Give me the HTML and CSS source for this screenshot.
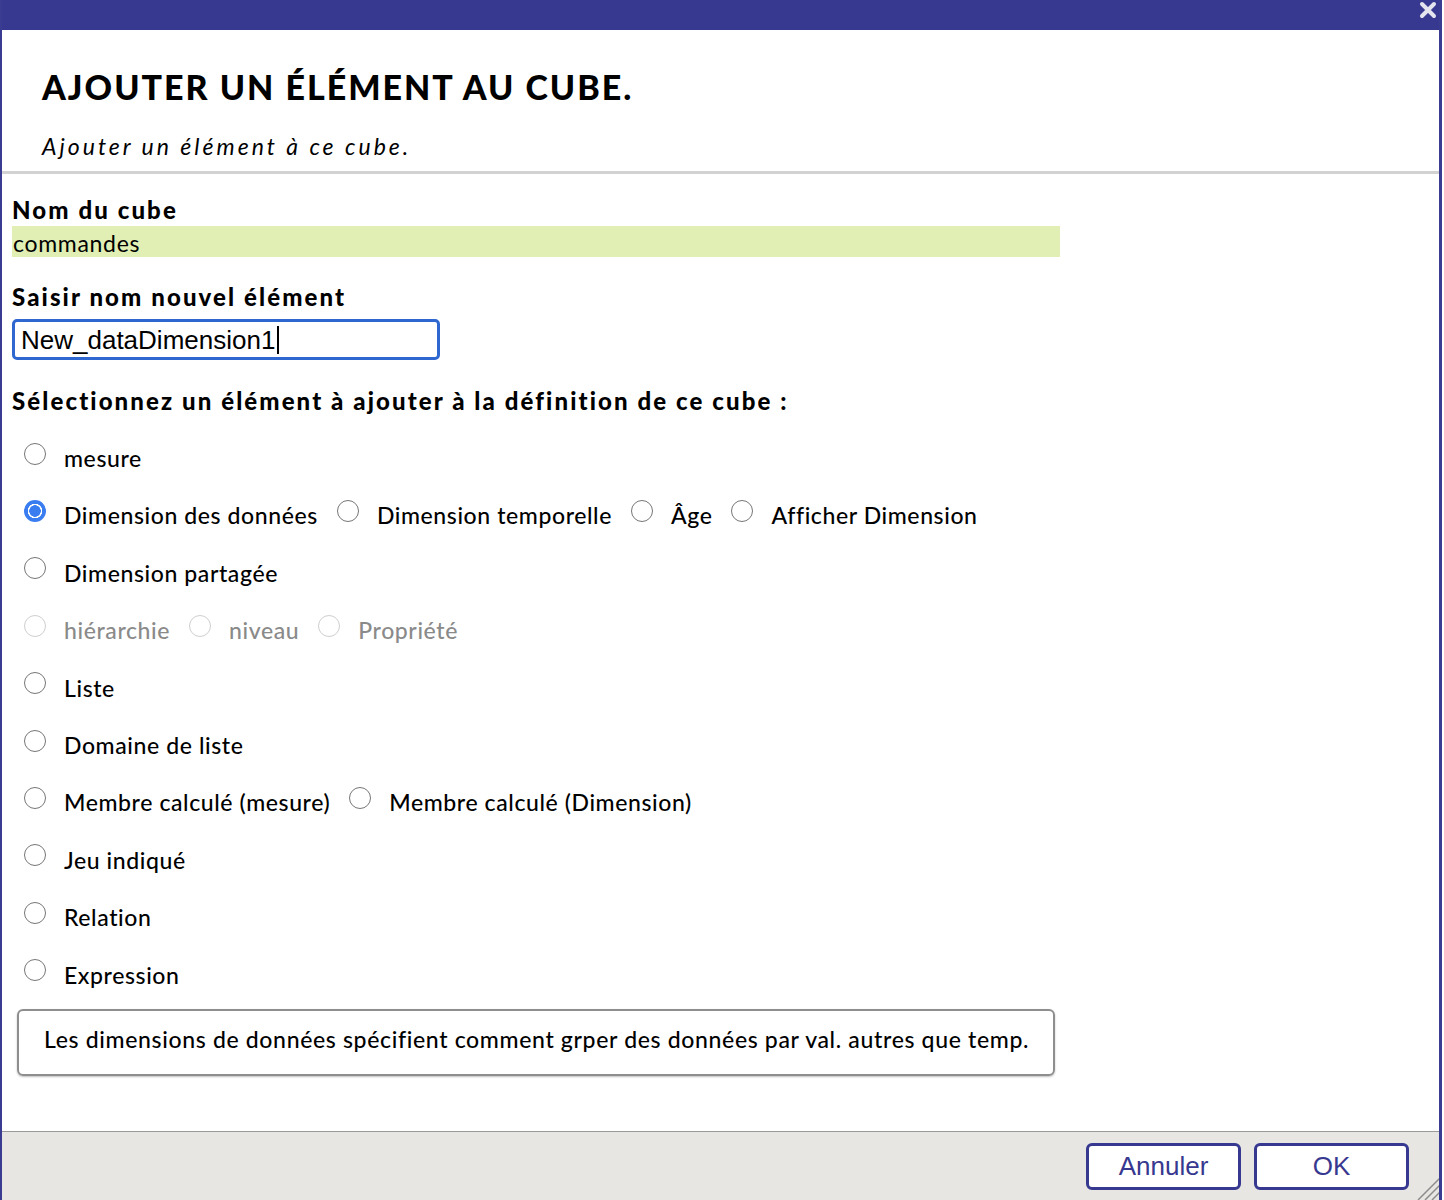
FILE: index.html
```html
<!DOCTYPE html>
<html lang="fr">
<head>
<meta charset="utf-8">
<title>Ajouter un élément au cube</title>
<link rel="stylesheet" href="styles.css">
</head>
<body>
<div class="dialog">
  <div class="titlebar">
    <svg class="close" width="18" height="18" viewBox="0 0 18 18"><path d="M3 3 L15 15 M15 3 L3 15" stroke="#e4e4ee" stroke-width="4" stroke-linecap="round"/></svg>
  </div>
  <div class="header">
    <h1 class="title">AJOUTER UN ÉLÉMENT AU CUBE.</h1>
    <p class="subtitle">Ajouter un élément à ce cube.</p>
  </div>
  <div class="content">
    <div class="label label-first">Nom du cube</div>
    <div class="cubename">commandes</div>
    <div class="label label-second">Saisir nom nouvel élément</div>
    <div class="input">New_dataDimension1<span class="caret"></span></div>
    <div class="label label-third">Sélectionnez un élément à ajouter à la définition de ce cube :</div>
    <div class="options">
      <div class="row"><label class="opt"><span class="radio"></span>mesure</label></div>
      <div class="row">
        <label class="opt"><span class="radio checked"></span>Dimension des données</label>
        <label class="opt"><span class="radio"></span>Dimension temporelle</label>
        <label class="opt"><span class="radio"></span>Âge</label>
        <label class="opt"><span class="radio"></span>Afficher Dimension</label>
      </div>
      <div class="row"><label class="opt"><span class="radio"></span>Dimension partagée</label></div>
      <div class="row disabled">
        <label class="opt"><span class="radio"></span>hiérarchie</label>
        <label class="opt"><span class="radio"></span>niveau</label>
        <label class="opt"><span class="radio"></span>Propriété</label>
      </div>
      <div class="row"><label class="opt"><span class="radio"></span>Liste</label></div>
      <div class="row"><label class="opt"><span class="radio"></span>Domaine de liste</label></div>
      <div class="row">
        <label class="opt"><span class="radio"></span>Membre calculé (mesure)</label>
        <label class="opt"><span class="radio"></span>Membre calculé (Dimension)</label>
      </div>
      <div class="row"><label class="opt"><span class="radio"></span>Jeu indiqué</label></div>
      <div class="row"><label class="opt"><span class="radio"></span>Relation</label></div>
      <div class="row"><label class="opt"><span class="radio"></span>Expression</label></div>
    </div>
    <div class="desc">Les dimensions de données spécifient comment grper des données par val. autres que temp.</div>
  </div>
  <div class="footer">
    <button class="btn">Annuler</button>
    <button class="btn">OK</button>
    <svg class="grip" width="26" height="26" viewBox="0 0 26 26"><path d="M25 3 L3 25 M25 10 L10 25 M25 17 L17 25" stroke="#8c8c8c" stroke-width="1.5"/></svg>
  </div>
</div>
</body>
</html>
```
FILE: styles.css
```css
html, body {
  margin: 0;
  padding: 0;
  background: #ffffff;
}
body {
  font-family: Lato, "Noto Sans", sans-serif;
  color: #000;
}
.dialog {
  width: 1442px;
  height: 1200px;
  box-sizing: border-box;
  border-left: 2px solid #3a3c92;
  border-right: 3px solid #3a3c92;
  display: flex;
  flex-direction: column;
  overflow: hidden;
}
.titlebar {
  height: 30px;
  flex: 0 0 30px;
  background: #37388f;
  display: flex;
  justify-content: flex-end;
  align-items: flex-start;
  padding: 1px 2px 0 0;
  box-sizing: border-box;
}
.header {
  padding: 37px 0 11px 40px;
  border-bottom: 3px solid #d2d2d2;
}
.title {
  margin: 0;
  font-size: 34px;
  line-height: 1.2;
  font-weight: 900;
  letter-spacing: 2px;
}
.subtitle {
  margin: 25px 0 0 0;
  font-size: 23px;
  line-height: 1.2;
  font-style: italic;
  letter-spacing: 3px;
}
.content {
  flex: 1;
  padding: 0 0 0 10px;
}
.label {
  font-size: 24px;
  line-height: 28px;
  font-weight: 900;
  letter-spacing: 2.1px;
}
.label-first { margin-top: 22px; }
.label-second { margin-top: 26px; }
.label-third { margin-top: 27px; }
.cubename {
  margin-top: 2px;
  width: 1048px;
  height: 31px;
  background: #e1efb4;
  font-size: 23px;
  letter-spacing: 0.7px;
  line-height: 34px;
  box-sizing: border-box;
  padding-left: 1px;
}
.input {
  margin-top: 8px;
  width: 428px;
  height: 41px;
  box-sizing: border-box;
  border: 3px solid #2f67d1;
  border-radius: 5px;
  font-family: "Liberation Sans", Arial, sans-serif;
  font-size: 26px;
  line-height: 34px;
  padding-left: 6px;
  display: flex;
  align-items: center;
}
.caret {
  display: inline-block;
  width: 1.5px;
  height: 28px;
  background: #000;
  margin-left: 2px;
}
.options {
  margin-top: 9px;
}
.row {
  height: 57.4px;
  display: flex;
  align-items: center;
  padding-left: 12px;
  gap: 19px;
}
.opt {
  display: flex;
  align-items: center;
  font-size: 23px;
  font-weight: 500;
  letter-spacing: 0.6px;
  padding-top: 10px;
}
.radio {
  width: 22px;
  height: 22px;
  box-sizing: border-box;
  border: 1.5px solid #767676;
  border-radius: 50%;
  background: #fff;
  margin-right: 18px;
  margin-top: -9px;
  flex: 0 0 22px;
}
.radio.checked {
  border: 2px solid #3a7df0;
  background: radial-gradient(circle, #3a7df0 0 5.5px, #fff 6px 7px, #3a7df0 7.5px);
}
.row.disabled .opt { color: #8a8a8a; }
.row.disabled .radio { border-color: #cfcfcf; }
.desc {
  margin: 11px 0 0 5px;
  width: 1038px;
  height: 67px;
  box-sizing: border-box;
  border: 2px solid #8e8e8e;
  border-radius: 6px;
  box-shadow: 0 1px 2px rgba(0,0,0,0.25);
  font-size: 23px;
  letter-spacing: 0.66px;
  font-weight: 500;
  display: flex;
  align-items: center;
  padding: 0 0 8px 25px;
}
.footer {
  flex: 0 0 69px;
  height: 69px;
  box-sizing: border-box;
  border-top: 1px solid #9a9a9a;
  background: #e8e6e3;
  display: flex;
  justify-content: flex-end;
  align-items: flex-start;
  gap: 13px;
  padding: 11px 30px 0 0;
  position: relative;
}
.btn {
  width: 155px;
  height: 47px;
  box-sizing: border-box;
  background: #fff;
  border: 3px solid #37388f;
  border-radius: 6px;
  color: #37388f;
  font-family: "Liberation Sans", Arial, sans-serif;
  font-size: 26px;
  padding: 0;
}
.grip {
  position: absolute;
  right: -2px;
  bottom: -1px;
}
```
